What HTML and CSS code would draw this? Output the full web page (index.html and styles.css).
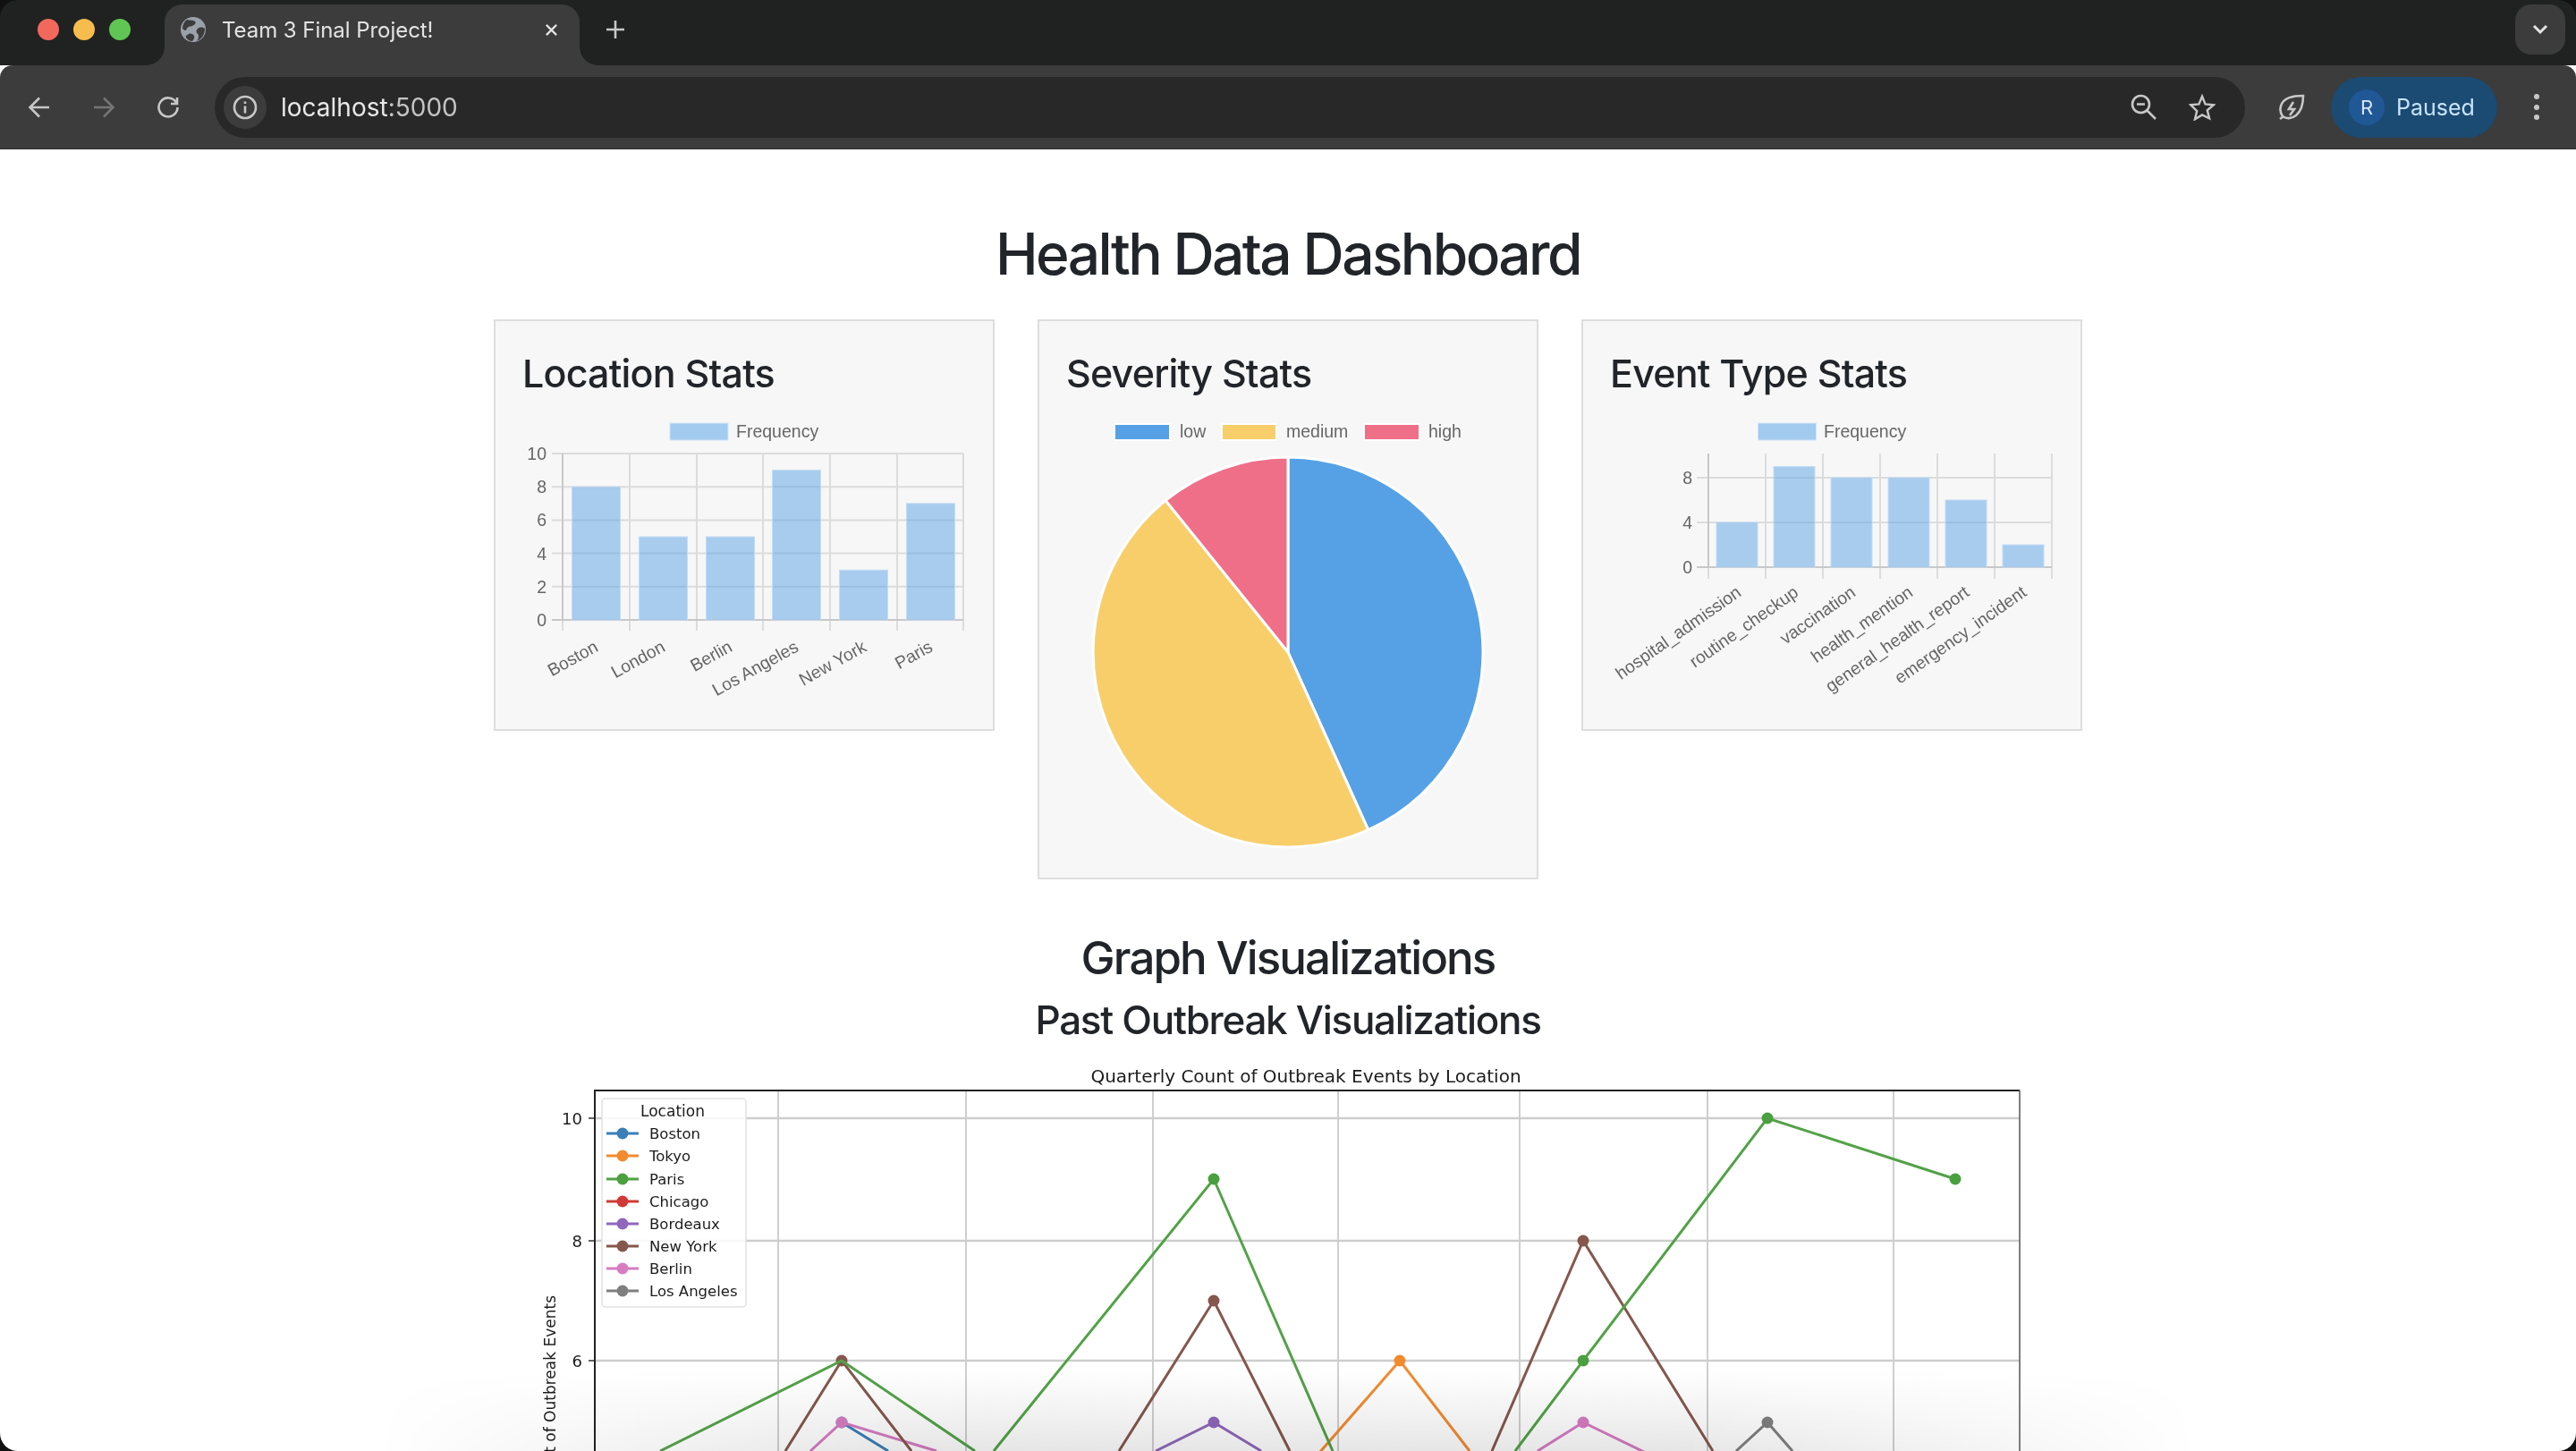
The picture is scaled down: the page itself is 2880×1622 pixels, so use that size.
FILE: index.html
```html
<!DOCTYPE html>
<html lang="en">
<head>
  <meta charset="UTF-8">
  <title>Team 3 Final Project!</title>
  <link rel="stylesheet" href="styles.css">
</head>
<body>
  <!-- browser chrome -->
  <header class="browser">
    <div class="tabstrip">
      <div class="lights">
        <span class="light light-red"></span>
        <span class="light light-yellow"></span>
        <span class="light light-green"></span>
      </div>
      <div class="tab">
        <svg class="favicon" viewBox="0 0 28 28">
          <circle cx="14" cy="14" r="14" fill="#9ba1a9"/>
          <path d="M7 3c3 1 7 0 9 2s-1 4-3 5-5 0-6 3-3 2-5 0C2 9 4 5 7 3zM27 13c-2-2-6-2-8 0s-2 4 0 6 1 5-1 8c5-2 9-7 9-14zM9 19c2-1 5 0 6 2s-1 5-2 6c-3 0-6-2-7-4s1-3 3-4z" fill="#3c3c3c"/>
        </svg>
        <span class="tab-title">Team 3 Final Project!</span>
        <svg class="tab-close" viewBox="0 0 16 16"><path d="M2 2l12 12M14 2L2 14"/></svg>
      </div>
      <svg class="new-tab" viewBox="0 0 22 22"><path d="M11 1v20M1 11h20"/></svg>
      <div class="tab-list">
        <svg viewBox="0 0 18 12"><path d="M2 2l7 7 7-7"/></svg>
      </div>
    </div>

    <div class="toolbar">
      <button class="tool">
        <svg viewBox="0 0 26 26"><path d="M24 13H3M13 2.500L2.500 13 13 23.500"/></svg>
      </button>
      <button class="tool tool-off">
        <svg viewBox="0 0 26 26"><path d="M2 13h21M13 2.500L23.500 13 13 23.500"/></svg>
      </button>
      <button class="tool">
        <svg viewBox="0 0 26 26"><path d="M22 7.500A10.500 10.500 0 1 0 23.500 13M23 2v7h-7"/></svg>
      </button>

      <div class="address">
        <span class="site-info">
          <svg viewBox="0 0 28 28">
            <circle cx="14" cy="14" r="12"/>
            <path d="M14 12.500v8M14 7.500v2.500"/>
          </svg>
        </span>
        <span class="url">localhost<span class="url-port">:5000</span></span>
        <button class="addr-icon">
          <svg viewBox="0 0 30 30"><circle cx="11.500" cy="11.500" r="9.500"/><path d="M7 11.500h9M18.500 18.500L28 28"/></svg>
        </button>
        <button class="addr-icon">
          <svg viewBox="0 0 32 32"><path d="M16 3l3.800 9.200 10 .8-7.600 6.500 2.400 9.700L16 25l-8.600 5.200 2.400-9.700L2.200 13l10-.8z"/></svg>
        </button>
      </div>

      <button class="tool tool-leaf">
        <svg viewBox="0 0 32 32"><path d="M29 3C20 3 9 4 5 12c-3 6-1 11 1 14 4 3 10 3 15-1 6-5 8-14 8-22zM7 26l-4 3M18 10l-5 8h6l-5 7" /></svg>
      </button>
      <div class="profile">
        <span class="avatar">R</span>
        <span class="profile-label">Paused</span>
      </div>
      <button class="tool">
        <svg viewBox="0 0 8 32" class="dots"><circle cx="4" cy="4" r="3"/><circle cx="4" cy="16" r="3"/><circle cx="4" cy="27" r="3"/></svg>
      </button>
    </div>
  </header>

  <main class="page">
    <h1>Health Data Dashboard</h1>

    <section class="stats-row">
      <div class="card">
        <h3>Location Stats</h3>
        <svg class="chart" width="492" height="326" viewBox="0 0 492 326">
          <rect class="legend-swatch" x="163" y="16" width="65" height="19"/>
          <text class="chart-text" x="237" y="32">Frequency</text>

          <path class="grid" d="M43 50V248M118 50V248M193 50V248M267 50V248M342 50V248M417 50V248M491 50V248"/>
          <path class="grid" d="M31 50H491M31 87.200H491M31 124.400H491M31 161.600H491M31 198.800H491"/>
          <path class="axis" d="M43 50V236M31 236H491"/>

          <rect class="bar" x="53.500" y="87.200" width="54" height="148.800"/>
          <rect class="bar" x="128.500" y="143" width="54" height="93"/>
          <rect class="bar" x="203.500" y="143" width="54" height="93"/>
          <rect class="bar" x="277.500" y="68.600" width="54" height="167.400"/>
          <rect class="bar" x="352.500" y="180.200" width="54" height="55.800"/>
          <rect class="bar" x="427.500" y="105.800" width="54" height="130.200"/>

          <text class="chart-text tick-y" x="25" y="57">10</text>
          <text class="chart-text tick-y" x="25" y="94">8</text>
          <text class="chart-text tick-y" x="25" y="131">6</text>
          <text class="chart-text tick-y" x="25" y="169">4</text>
          <text class="chart-text tick-y" x="25" y="206">2</text>
          <text class="chart-text tick-y" x="25" y="243">0</text>

          <text class="chart-text tick-x" transform="translate(84 270) rotate(-29)">Boston</text>
          <text class="chart-text tick-x" transform="translate(159 270) rotate(-29)">London</text>
          <text class="chart-text tick-x" transform="translate(234 270) rotate(-29)">Berlin</text>
          <text class="chart-text tick-x" transform="translate(308 270) rotate(-29)">Los Angeles</text>
          <text class="chart-text tick-x" transform="translate(384 270) rotate(-29)">New York</text>
          <text class="chart-text tick-x" transform="translate(458 270) rotate(-29)">Paris</text>
        </svg>
      </div>

      <div class="card">
        <h3>Severity Stats</h3>
        <svg class="chart" width="492" height="492" viewBox="0 0 492 492">
          <rect class="pie-swatch sev-low" x="52" y="17" width="62" height="18"/>
          <text class="chart-text" x="125" y="32">low</text>
          <rect class="pie-swatch sev-medium" x="172" y="17" width="61" height="18"/>
          <text class="chart-text" x="244" y="32">medium</text>
          <rect class="pie-swatch sev-high" x="331" y="17" width="62" height="18"/>
          <text class="chart-text" x="403" y="32">high</text>

          <path class="slice sev-low" d="M246 272V54A218 218 0 0 1 335.700 470.700Z"/>
          <path class="slice sev-medium" d="M246 272L335.700 470.700A218 218 0 0 1 109.100 102.400Z"/>
          <path class="slice sev-high" d="M246 272L109.100 102.400A218 218 0 0 1 246 54Z"/>
        </svg>
      </div>

      <div class="card">
        <h3>Event Type Stats</h3>
        <svg class="chart" width="492" height="326" viewBox="0 0 492 326">
          <rect class="legend-swatch" x="163.500" y="16" width="65" height="19"/>
          <text class="chart-text" x="237" y="32">Frequency</text>

          <path class="grid" d="M108 50V190M172 50V190M236 50V190M300 50V190M364 50V190M428 50V190M492 50V190"/>
          <path class="grid" d="M95 77H492M95 127H492"/>
          <path class="axis" d="M108 50V177M95 177H492"/>

          <rect class="bar" x="117" y="127" width="46" height="50"/>
          <rect class="bar" x="181" y="64.500" width="46" height="112.500"/>
          <rect class="bar" x="245" y="77" width="46" height="100"/>
          <rect class="bar" x="309" y="77" width="46" height="100"/>
          <rect class="bar" x="373" y="102" width="46" height="75"/>
          <rect class="bar" x="437" y="152" width="46" height="25"/>

          <text class="chart-text tick-y" x="90" y="84">8</text>
          <text class="chart-text tick-y" x="90" y="134">4</text>
          <text class="chart-text tick-y" x="90" y="184">0</text>

          <text class="chart-text tick-x" transform="translate(146 208) rotate(-35)">hospital_admission</text>
          <text class="chart-text tick-x" transform="translate(210 208) rotate(-35)">routine_checkup</text>
          <text class="chart-text tick-x" transform="translate(274 208) rotate(-35)">vaccination</text>
          <text class="chart-text tick-x" transform="translate(338 208) rotate(-35)">health_mention</text>
          <text class="chart-text tick-x" transform="translate(401 208) rotate(-35)">general_health_report</text>
          <text class="chart-text tick-x" transform="translate(465 208) rotate(-35)">emergency_incident</text>
        </svg>
      </div>
    </section>

    <h2>Graph Visualizations</h2>
    <h3 class="sub-heading">Past Outbreak Visualizations</h3>

    <!-- matplotlib figure, cut off by the window -->
    <svg class="figure" width="1680" height="440" viewBox="600 1190 1680 440">
      <text class="plot-title" x="1460" y="1210">Quarterly Count of Outbreak Events by Location</text>
      <text class="plot-label" transform="rotate(-90 621 1448)" x="621" y="1448">Count of Outbreak Events</text>

      <path class="plot-grid-v" d="M870 1219V1640M1080 1219V1640M1289 1219V1640M1496 1219V1640M1699 1219V1640M1909 1219V1640M2117 1219V1640"/>
      <path class="plot-grid-h" d="M665 1250H2258M665 1387H2258M665 1521H2258"/>
      <path class="plot-tick" d="M658 1250H665M658 1387H665M658 1521H665"/>
      <path class="plot-frame" d="M665 1640V1219H2258"/>
      <path class="plot-frame-right" d="M2258 1219V1640"/>

      <text class="plot-tick-label" x="651" y="1257">10</text>
      <text class="plot-tick-label" x="651" y="1394">8</text>
      <text class="plot-tick-label" x="651" y="1528">6</text>

      <g class="series s-blue">
        <path d="M941 1590L993 1622"/>
        <circle cx="941" cy="1590" r="6.500"/>
      </g>
      <g class="series s-orange">
        <path d="M1461 1640L1565 1521L1643 1622"/>
        <circle cx="1565" cy="1521" r="6.500"/>
      </g>
      <g class="series s-purple">
        <path d="M1292 1622L1357 1590L1410 1622"/>
        <circle cx="1357" cy="1590" r="6.500"/>
      </g>
      <g class="series s-pink">
        <path d="M906 1622L941 1590L1047 1622M1719 1622L1770 1590L1873 1640"/>
        <circle cx="941" cy="1590" r="6.500"/>
        <circle cx="1770" cy="1590" r="6.500"/>
      </g>
      <g class="series s-gray">
        <path d="M1941 1622L1976 1590L2004 1622"/>
        <circle cx="1976" cy="1590" r="6.500"/>
      </g>
      <g class="series s-brown">
        <path d="M878 1622L941 1521L1019 1622M1251 1622L1357 1454L1442 1622M1668 1622L1770 1387L1915 1622"/>
        <circle cx="941" cy="1521" r="6.500"/>
        <circle cx="1357" cy="1454" r="6.500"/>
        <circle cx="1770" cy="1387" r="6.500"/>
      </g>
      <g class="series s-green">
        <path d="M738 1622L941 1521L1090 1622M1111 1622L1357 1318L1490 1622M1694 1622L1770 1521L1976 1250L2186 1318"/>
        <circle cx="1357" cy="1318" r="6.500"/>
        <circle cx="1770" cy="1521" r="6.500"/>
        <circle cx="1976" cy="1250" r="6.500"/>
        <circle cx="2186" cy="1318" r="6.500"/>
      </g>

      <rect class="plot-legend" x="673" y="1228" width="161" height="233" rx="4"/>
      <text class="plot-legend-title" x="752" y="1248">Location</text>
      <g class="series s-blue"><path d="M678 1267H714"/><circle cx="696" cy="1267" r="6.500"/></g>
      <text class="plot-legend-text" x="726" y="1273">Boston</text>
      <g class="series s-orange"><path d="M678 1292H714"/><circle cx="696" cy="1292" r="6.500"/></g>
      <text class="plot-legend-text" x="726" y="1298">Tokyo</text>
      <g class="series s-green"><path d="M678 1318H714"/><circle cx="696" cy="1318" r="6.500"/></g>
      <text class="plot-legend-text" x="726" y="1324">Paris</text>
      <g class="series s-red"><path d="M678 1343H714"/><circle cx="696" cy="1343" r="6.500"/></g>
      <text class="plot-legend-text" x="726" y="1349">Chicago</text>
      <g class="series s-purple"><path d="M678 1368H714"/><circle cx="696" cy="1368" r="6.500"/></g>
      <text class="plot-legend-text" x="726" y="1374">Bordeaux</text>
      <g class="series s-brown"><path d="M678 1393H714"/><circle cx="696" cy="1393" r="6.500"/></g>
      <text class="plot-legend-text" x="726" y="1399">New York</text>
      <g class="series s-pink"><path d="M678 1418H714"/><circle cx="696" cy="1418" r="6.500"/></g>
      <text class="plot-legend-text" x="726" y="1424">Berlin</text>
      <g class="series s-gray"><path d="M678 1443H714"/><circle cx="696" cy="1443" r="6.500"/></g>
      <text class="plot-legend-text" x="726" y="1449">Los Angeles</text>
    </svg>
  </main>

  <div class="dock-fade"></div>
  <div class="window-edge"></div>
</body>
</html>
```

FILE: styles.css
```css
html, body {
  margin: 0;
  height: 100%;
  overflow: hidden;
  background: #fff;
}

body {
  position: relative;
  font-family: 'Inter', sans-serif;
  color: #212529;
}

button {
  background: none;
  border: none;
  padding: 0;
}

/* browser chrome */
.browser svg {
  fill: none;
  stroke: #c7c7c7;
  stroke-width: 2.6;
  display: block;
}

.tabstrip {
  height: 73px;
  background: #202221;
  display: flex;
  align-items: flex-start;
  padding-left: 42px;
}

.lights {
  display: flex;
  gap: 16px;
  margin-top: 21px;
}

.light {
  width: 24px;
  height: 24px;
  border-radius: 50%;
}

.light-red { background: #f2685d; }
.light-yellow { background: #f6bc4e; }
.light-green { background: #60c554; }

.tab {
  position: relative;
  width: 464px;
  height: 68px;
  margin-top: 5px;
  margin-left: 38px;
  background: #3c3c3c;
  border-radius: 20px 20px 0 0;
  display: flex;
  align-items: center;
  padding: 0 24px 12px 18px;
  box-sizing: border-box;
}

/* the small inverse curves at the tab's feet */
.tab::before,
.tab::after {
  content: "";
  position: absolute;
  bottom: 0;
  width: 20px;
  height: 20px;
}

.tab::before {
  left: -20px;
  background: radial-gradient(circle at 0 0, #202221 19.5px, #3c3c3c 20px);
}

.tab::after {
  right: -20px;
  background: radial-gradient(circle at 100% 0, #202221 19.5px, #3c3c3c 20px);
}

.browser .favicon {
  width: 28px;
  height: 28px;
  stroke: none;
  flex: none;
}

.tab-title {
  margin-left: 18px;
  font-size: 24px;
  color: #e3e3e3;
  flex: 1;
  white-space: nowrap;
  letter-spacing: -0.05px;
}

.browser .tab-close {
  width: 15px;
  height: 15px;
  stroke: #e3e3e3;
  stroke-width: 2.4;
}

.browser .new-tab {
  width: 22px;
  height: 22px;
  margin: 22px 0 0 29px;
}

.tab-list {
  margin-left: auto;
  margin-top: 5px;
  margin-right: 12px;
  width: 56px;
  height: 56px;
  border-radius: 18px;
  background: #3c3c3c;
  display: flex;
  align-items: center;
  justify-content: center;
}

.tab-list svg {
  width: 18px;
  height: 12px;
  stroke: #e3e3e3;
  stroke-width: 3;
}

.toolbar {
  height: 93px;
  background: #3c3c3c;
  border-bottom: 1px solid #2f2f2f;
  border-radius: 14px 14px 0 0;
  display: flex;
  align-items: center;
  padding: 0 8px;
}

.tool {
  width: 72px;
  height: 68px;
  flex: none;
  display: flex;
  align-items: center;
  justify-content: center;
}

.tool svg {
  width: 26px;
  height: 26px;
}

.tool-off svg {
  stroke: #757575;
}

.browser .tool-leaf svg {
  width: 32px;
  height: 32px;
}

.browser .dots {
  width: 8px;
  height: 32px;
  fill: #c7c7c7;
  stroke: none;
}

.address {
  flex: 1;
  height: 68px;
  margin: 0 16px;
  background: #282828;
  border-radius: 34px;
  display: flex;
  align-items: center;
  padding: 0 20px 0 10px;
}

.site-info {
  width: 48px;
  height: 48px;
  border-radius: 50%;
  background: #3c3c3c;
  display: flex;
  align-items: center;
  justify-content: center;
}

.site-info svg {
  width: 28px;
  height: 28px;
}

.url {
  margin-left: 16px;
  font-size: 28px;
  color: #e8e8e8;
  flex: 1;
}

.url-port {
  color: #c4c4c4;
}

.addr-icon {
  width: 56px;
  height: 56px;
  margin-left: 9px;
  display: flex;
  align-items: center;
  justify-content: center;
}

.addr-icon svg {
  width: 30px;
  height: 30px;
}

.profile {
  width: 186px;
  height: 68px;
  margin: 0 8px;
  background: #1b4a73;
  border-radius: 34px;
  display: flex;
  align-items: center;
  padding-left: 20px;
  box-sizing: border-box;
}

.avatar {
  width: 40px;
  height: 40px;
  border-radius: 50%;
  background: #205795;
  color: #d6e6f7;
  font-size: 22px;
  display: flex;
  align-items: center;
  justify-content: center;
}

.profile-label {
  margin-left: 13px;
  font-size: 25px;
  color: #c6e3fb;
}

/* page */
.page {
  text-align: center;
}

h1, h2, h3 {
  font-weight: 500;
  line-height: 1.2;
}

h1 {
  font-size: 64px;
  line-height: 77px;
  margin: 78px 0 35px;
  letter-spacing: -2.6px;
}

.stats-row {
  display: flex;
  justify-content: center;
  align-items: flex-start;
  gap: 48px;
}

.card {
  width: 560px;
  box-sizing: border-box;
  padding: 32px;
  background: #f7f7f7;
  border: 2px solid #dedede;
  text-align: left;
}

.card h3 {
  font-size: 43px;
  line-height: 52px;
  margin: 0 0 14px -2px;
  letter-spacing: -0.8px;
}

.chart {
  display: block;
  overflow: visible;
}

.chart-text {
  font-family: 'Liberation Sans', sans-serif;
  font-size: 19.5px;
  fill: #666;
}

.tick-y,
.tick-x {
  text-anchor: end;
}

.legend-swatch {
  fill: #a3caef;
  stroke: #d3e6f8;
  stroke-width: 1;
}

.grid {
  fill: none;
  stroke: #dcdcdc;
  stroke-width: 2;
}

.axis {
  fill: none;
  stroke: #c8c8c8;
  stroke-width: 2;
}

.bar {
  fill: #5aa2e6;
  fill-opacity: 0.5;
  stroke: #c3dcf5;
  stroke-width: 1;
}

.pie-swatch {
  stroke: #fff;
  stroke-width: 2;
}

.slice {
  stroke: #fff;
  stroke-width: 3;
  stroke-linejoin: round;
}

.sev-low { fill: #56a1e6; }
.sev-medium { fill: #f8ce6b; }
.sev-high { fill: #f06f88; }

h2 {
  font-size: 51px;
  line-height: 58px;
  margin: 59px 0 15px;
  letter-spacing: -1.9px;
}

.sub-heading {
  font-size: 44px;
  line-height: 50px;
  margin: 0 0 25px;
  letter-spacing: -1.3px;
}

/* matplotlib figure */
.figure {
  display: block;
  margin: 0 auto;
}

.plot-title,
.plot-label,
.plot-tick-label,
.plot-legend-title,
.plot-legend-text {
  font-family: 'DejaVu Sans', sans-serif;
  fill: #1c1c1c;
}

.plot-title {
  font-size: 20px;
  text-anchor: middle;
}

.plot-label {
  font-size: 17px;
  text-anchor: end;
}

.plot-tick-label {
  font-size: 18px;
  text-anchor: end;
}

.plot-legend-title {
  font-size: 17px;
  text-anchor: middle;
}

.plot-legend-text {
  font-size: 16.5px;
}

.plot-grid-v {
  fill: none;
  stroke: #c0c0c0;
  stroke-width: 1.5;
}

.plot-grid-h {
  fill: none;
  stroke: #cdcdcd;
  stroke-width: 2.5;
}

.plot-tick {
  fill: none;
  stroke: #333;
  stroke-width: 1.5;
}

.plot-frame {
  fill: none;
  stroke: #222;
  stroke-width: 2;
}

.plot-frame-right {
  fill: none;
  stroke: #555;
  stroke-width: 1.5;
}

.plot-legend {
  fill: #fff;
  fill-opacity: 0.85;
  stroke: #e2e2e2;
  stroke-width: 1.5;
}

.series path {
  fill: none;
  stroke-width: 3;
}

.s-blue path { stroke: #3a7fb8; }
.s-blue circle { fill: #3a7fb8; }
.s-orange path { stroke: #f28b30; }
.s-orange circle { fill: #f28b30; }
.s-green path { stroke: #52a247; }
.s-green circle { fill: #4a9f3f; }
.s-red path { stroke: #d03a36; }
.s-red circle { fill: #d03a36; }
.s-purple path { stroke: #9067bd; }
.s-purple circle { fill: #9067bd; }
.s-brown path { stroke: #85574d; }
.s-brown circle { fill: #85574d; }
.s-pink path { stroke: #d77cc2; }
.s-pink circle { fill: #d77cc2; }
.s-gray path { stroke: #7f7f7f; }
.s-gray circle { fill: #7f7f7f; }

/* shadow of the dock over the bottom of the window */
.dock-fade {
  position: absolute;
  left: 0;
  right: 0;
  bottom: 0;
  height: 90px;
  background: linear-gradient(to bottom, #fff, #e6e6e6);
  mix-blend-mode: multiply;
  -webkit-mask-image: linear-gradient(to right, transparent 420px, #000 1000px, #000 1880px, transparent 2460px);
  mask-image: linear-gradient(to right, transparent 420px, #000 1000px, #000 1880px, transparent 2460px);
}

/* rounded window corners */
.window-edge {
  position: absolute;
  inset: 0;
  border-radius: 20px;
  box-shadow: 0 0 0 30px #111;
  pointer-events: none;
}
```
